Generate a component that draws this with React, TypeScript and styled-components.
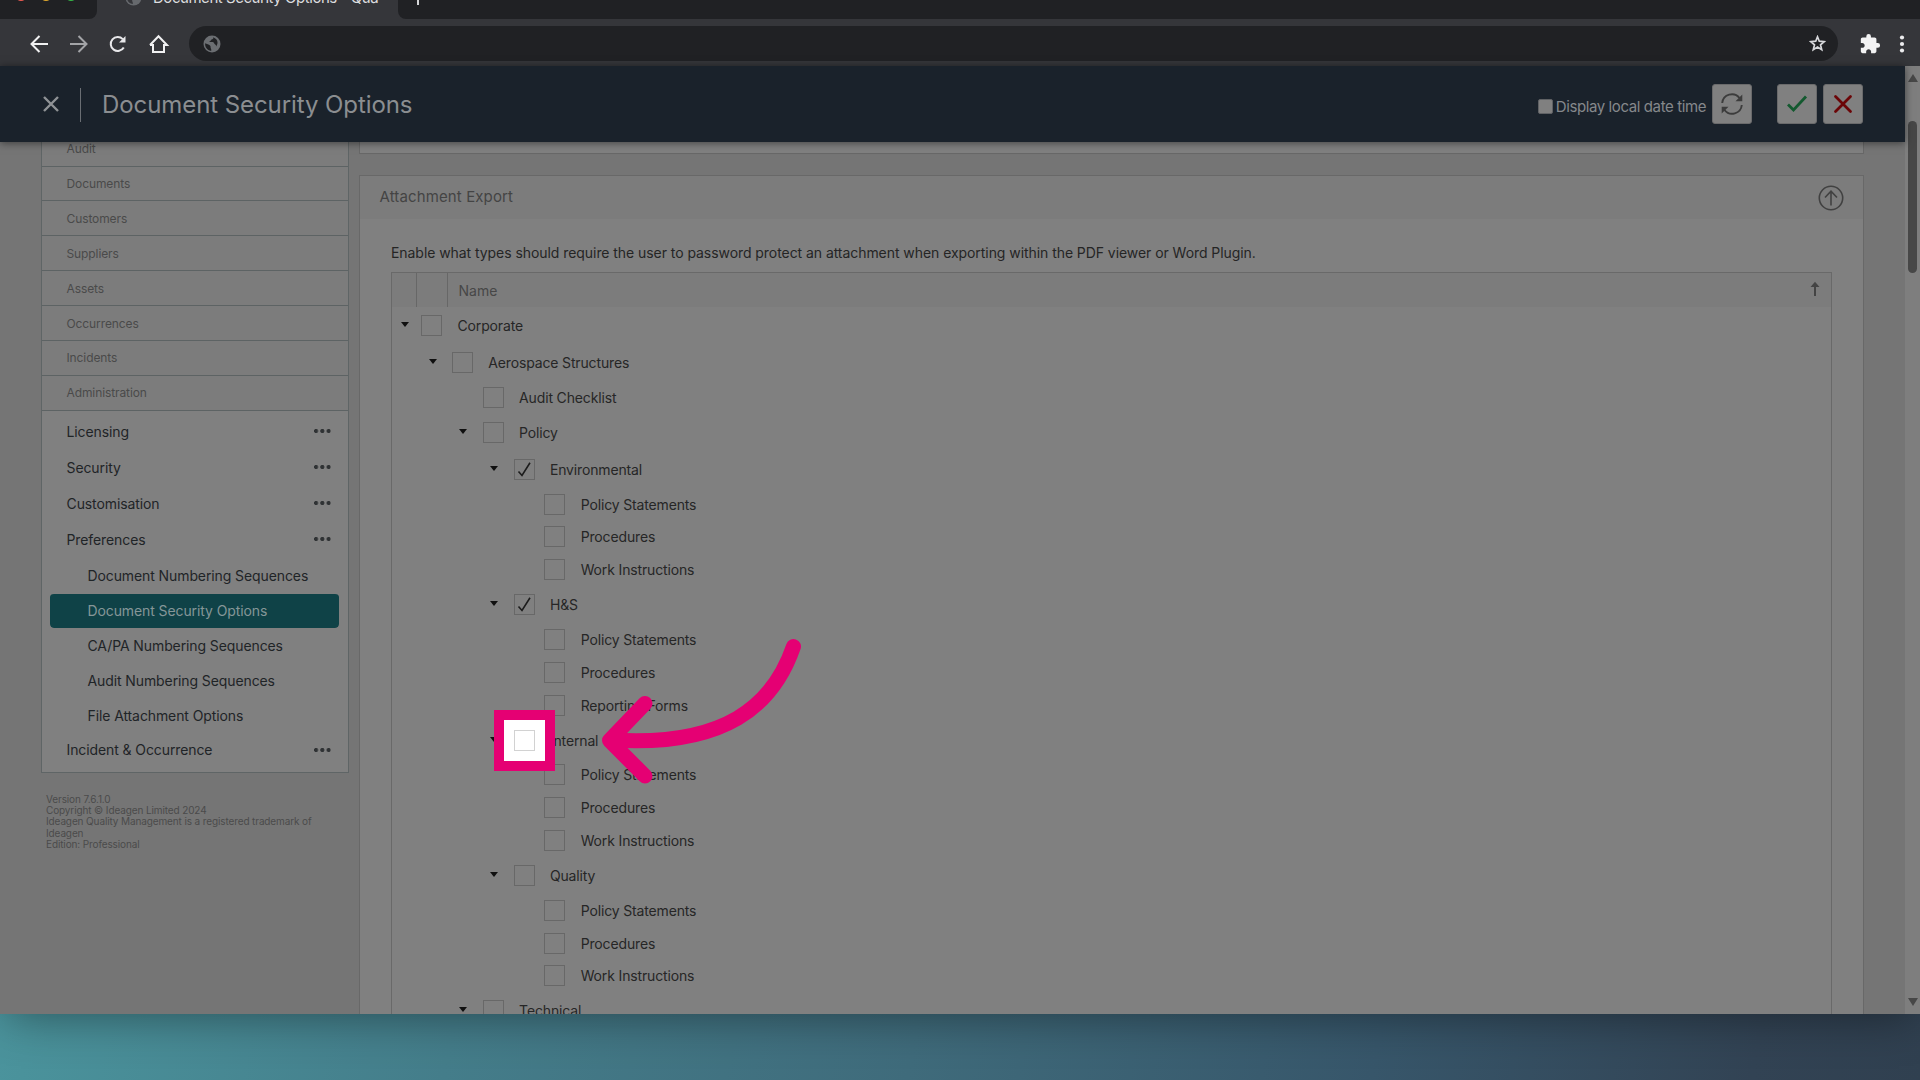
import React from "react";
import styled, { createGlobalStyle } from "styled-components";

const GlobalStyle = createGlobalStyle`
  * { box-sizing: border-box; }
  html, body { margin: 0; padding: 0; overflow: hidden; }
  body { font-family: Inter, "Liberation Sans", sans-serif; }
`;

const PINK = "#e50073";

const Page = styled.div`
  position: relative;
  width: 1920px;
  height: 1080px;
  overflow: hidden;
  background: linear-gradient(100deg, #4f9ba4 0%, #4a929b 10%, #447d8a 30%, #3f6b7b 52%, #37566a 74%, #324354 92%, #304050 100%);
`;

const Browser = styled.div`
  display: flex;
  flex-direction: column;
  height: 1014px;
  overflow: hidden;
  background: #35363a;
  box-shadow: 0 8px 44px -6px rgba(0, 0, 0, 0.42);
`;

const TabStrip = styled.div`
  display: flex;
  flex: none;
  height: 43px;
  margin-top: -24px;
  background: #35363a;
`;

const StripEnd = styled.div<{ $side: "left" | "right" }>`
  display: flex;
  align-items: center;
  background: #202124;
  ${(p) =>
    p.$side === "left"
      ? "width: 97px; padding: 0 0 5px 15px; gap: 13px; border-bottom-right-radius: 8px;"
      : "flex: 1; padding-left: 12px; border-bottom-left-radius: 8px;"}
`;

const Light = styled.span<{ $color: string }>`
  width: 12px;
  height: 12px;
  border-radius: 50%;
  background: ${(p) => p.$color};
`;

const ActiveTab = styled.div`
  display: flex;
  align-items: center;
  gap: 11px;
  width: 301px;
  padding-left: 28px;
  color: #dcdddf;
  font-size: 15px;
  letter-spacing: -0.46px;
  white-space: nowrap;
`;

const Toolbar = styled.div`
  display: flex;
  flex: none;
  align-items: center;
  height: 47px;
  padding: 2px 9px 0 28px;
`;

const NavIcons = styled.div`
  display: flex;
  gap: 16px;
  width: 161px;
`;

const AddressBar = styled.div`
  display: flex;
  align-items: center;
  justify-content: space-between;
  width: 1649px;
  height: 35px;
  padding: 0 12px 0 14px;
  border-radius: 18px;
  background: #202124;
`;

const BarActions = styled.div`
  display: flex;
  flex: 1;
  align-items: center;
  justify-content: space-between;
  padding-left: 21px;
`;

const AppBar = styled.header`
  position: relative;
  z-index: 1;
  display: flex;
  flex: none;
  align-items: center;
  width: 1905px;
  height: 76px;
  padding: 0 42px 0 42px;
  background: #1a222b;
  box-shadow: 0 1px 8px rgba(0, 0, 0, 0.5);
`;

const Separator = styled.span`
  width: 1px;
  height: 34px;
  margin: 2px 21px 0 20px;
  background: #6a6e73;
`;

const Title = styled.h1`
  flex: 1;
  margin: 0;
  color: #8b8e91;
  font-size: 24px;
  font-weight: 400;
  letter-spacing: -0.08px;
`;

const LocalTime = styled.label`
  display: flex;
  align-items: center;
  gap: 3px;
  margin: 5px 6px 0 0;
  color: #85888b;
  font-size: 15px;
  letter-spacing: -0.4px;
`;

const NativeBox = styled.span`
  width: 15px;
  height: 15px;
  border: 1px solid #5f6164;
  border-radius: 2px;
  background: #808080;
`;

const IconButton = styled.button<{ $gap?: number }>`
  display: flex;
  align-items: center;
  justify-content: center;
  width: 40px;
  height: 40px;
  margin: 0 0 0 ${(p) => p.$gap ?? 0}px;
  padding: 0;
  border: 1px solid #6a6a6b;
  border-radius: 3px;
  background: #808080;
`;

const Viewport = styled.div`
  display: flex;
  flex: 1;
  min-height: 0;
`;

const Content = styled.div`
  display: flex;
  align-items: flex-start;
  width: 1905px;
  padding-left: 41px;
  overflow: hidden;
  background: #757575;
`;

const Sidebar = styled.aside`
  width: 308px;
  margin: -10.3px 10px 0 0;
`;

const Menu = styled.nav`
  border: 1px solid #5f6566;
  border-top: 0;
  background: #808080;
`;

const Section = styled.div`
  display: flex;
  align-items: center;
  height: 34.9px;
  padding-left: 24.5px;
  border-bottom: 1px solid #5d6364;
  background: #7c7c7c;
  color: #4a4a4a;
  font-size: 12px;
  letter-spacing: -0.1px;
`;

const SubMenu = styled.div`
  padding: 3px 9px 4px 8px;
`;

const MenuItem = styled.div<{ $level?: number; $tall?: boolean; $active?: boolean }>`
  display: flex;
  align-items: center;
  justify-content: space-between;
  height: ${(p) => (p.$tall ? 36 : 35)}px;
  padding: 0 8px ${(p) => (p.$level ? 1 : 2)}px ${(p) => (p.$level ? 37.5 : 16.5)}px;
  border-top: 1px solid transparent;
  border-radius: 4px;
  background: ${(p) => (p.$active ? "#0f4247" : "transparent")};
  background-clip: padding-box;
  color: ${(p) => (p.$active ? "#859698" : "#1f2427")};
  font-size: 14px;
  letter-spacing: -0.1px;
  white-space: nowrap;
`;

const Dots = styled.span`
  width: 17px;
  height: 4px;
  background: radial-gradient(circle at 2px 2px, #2f3234 1.8px, transparent 2.3px) 0 0 / 6.3px 4px;
`;

const Footnote = styled.p`
  margin: 21px 30px 0 5px;
  color: #4b4b4b;
  font-size: 10px;
  line-height: 11.3px;
  letter-spacing: -0.12px;
`;

const Main = styled.main`
  width: 1505px;
`;

const PreviousPanel = styled.div`
  height: 12px;
  margin-bottom: 21px;
  border: 1px solid #686868;
  border-top: 0;
  background: #808080;
`;

const Panel = styled.section`
  height: 900px;
  border: 1px solid #686868;
  background: #808080;
`;

const PanelHeader = styled.header`
  display: flex;
  align-items: center;
  justify-content: space-between;
  height: 43px;
  padding: 0 19px 0 19.5px;
  background: #7c7c7c;
  color: #444444;
  font-size: 15px;
  letter-spacing: 0.12px;
`;

const PanelTitle = styled.span`
  padding-bottom: 2px;
`;

const Hint = styled.p`
  margin: 24px 0 9px 31px;
  color: #252525;
  font-size: 14px;
  line-height: 20px;
  letter-spacing: -0.06px;
`;

const Grid = styled.div`
  width: 1441px;
  height: 800px;
  margin-left: 31px;
  border: 1px solid #696969;
`;

const GridHead = styled.div`
  display: grid;
  grid-template-columns: 25px 31px 1fr 22px;
  align-items: center;
  height: 34px;
  background: #7c7c7c;
  color: #474747;
  font-size: 14px;
`;

const HeadCell = styled.span<{ $ruled?: boolean }>`
  display: flex;
  align-items: center;
  height: 100%;
  padding-left: ${(p) => (p.$ruled ? 0 : 10.5)}px;
  ${(p) => p.$ruled && "border-right: 1px solid #676767;"}
`;

const SortArrow = styled.svg`
  margin-top: -2px;
`;

const TreeRow = styled.div<{ $level: number; $leaf?: boolean }>`
  display: flex;
  align-items: center;
  height: ${(p) => (p.$leaf ? 32.8 : 37)}px;
  padding-left: ${(p) => (p.$level ? p.$level * 30.8 - 5.6 : 0)}px;
  color: #262626;
  font-size: 14px;
  letter-spacing: -0.15px;
`;

const CaretCell = styled.span<{ $root?: boolean }>`
  display: flex;
  justify-content: center;
  width: ${(p) => (p.$root ? 25.2 : 30.8)}px;
  margin-top: -2px;
`;

const Caret = styled.span`
  border: 4.5px solid transparent;
  border-top: 5px solid #101010;
  border-bottom: 0;
`;

const CheckBox = styled.span`
  display: flex;
  align-items: center;
  justify-content: center;
  width: 21px;
  height: 21px;
  margin: 0 15.3px 0 4px;
  border: 1px solid #686868;
`;

const Scrollbar = styled.div`
  display: flex;
  flex-direction: column;
  align-items: center;
  width: 15px;
  margin-top: -76px;
  padding: 8px 0;
  background: #7e7e7e;
`;

const ScrollArrow = styled.span<{ $down?: boolean }>`
  border: 5px solid transparent;
  ${(p) =>
    p.$down
      ? "border-top: 8px solid #474747; border-bottom: 0;"
      : "border-bottom: 8px solid #474747; border-top: 0;"}
`;

const Thumb = styled.span`
  width: 9px;
  height: 152px;
  margin: 39px 0 auto;
  border-radius: 5px;
  background: #474747;
`;

const Spotlight = styled.div`
  position: absolute;
  left: 494px;
  top: 710px;
  display: flex;
  align-items: center;
  justify-content: center;
  width: 61px;
  height: 61px;
  border: 10px solid ${PINK};
  background: #ffffff;
`;

const SpotBox = styled.span`
  width: 21px;
  height: 21px;
  border: 1px solid #d2d2d2;
`;

const ArrowLayer = styled.svg`
  position: absolute;
  left: 590px;
  top: 630px;
`;

const Globe = ({ size, color, hole }: { size: number; color: string; hole: string }) => (
  <svg width={size} height={size} viewBox="0 0 18 18">
    <circle cx="9" cy="9" r="8.5" fill={color} />
    <path
      d="M10 2.2c1 1.3-.3 2.2-1.600 2.400-.2 1.200-1.300 1.300-2.200 1.600.6 1 2 .8 3.500.9 1.300.2 1.200 1.800 2.500 2.300.8.4 1.200 1.400.7 2.400 2.200-2.600 3.100-7.400-2.900-9.600z M2.200 8.300c1.500.8 3.600 1.300 4.800 2.200 1 .9.300 2 .900 3.100.4.700.5 1.500.300 2.300-3.900-.5-6.500-3.600-6-7.600z"
      fill={hole}
    />
  </svg>
);

const BackArrow = ({ color, flip }: { color: string; flip?: boolean }) => (
  <svg width="23" height="22" viewBox="0 0 23 22" fill="none" stroke={color} strokeWidth="2">
    <path d={flip ? "M3 11H19M11.500 3L19.500 11L11.500 19" : "M20 11H4M11.500 3L3.500 11L11.500 19"} />
  </svg>
);

type Node = { label: string; level: number; leaf?: boolean; checked?: boolean };

const tree: Node[] = [
  { label: "Corporate", level: 0 },
  { label: "Aerospace Structures", level: 1 },
  { label: "Audit Checklist", level: 2, leaf: true },
  { label: "Policy", level: 2 },
  { label: "Environmental", level: 3, checked: true },
  { label: "Policy Statements", level: 4, leaf: true },
  { label: "Procedures", level: 4, leaf: true },
  { label: "Work Instructions", level: 4, leaf: true },
  { label: "H&S", level: 3, checked: true },
  { label: "Policy Statements", level: 4, leaf: true },
  { label: "Procedures", level: 4, leaf: true },
  { label: "Reporting Forms", level: 4, leaf: true },
  { label: "Internal", level: 3 },
  { label: "Policy Statements", level: 4, leaf: true },
  { label: "Procedures", level: 4, leaf: true },
  { label: "Work Instructions", level: 4, leaf: true },
  { label: "Quality", level: 3 },
  { label: "Policy Statements", level: 4, leaf: true },
  { label: "Procedures", level: 4, leaf: true },
  { label: "Work Instructions", level: 4, leaf: true },
  { label: "Technical", level: 2 },
];

const sections = ["Audit", "Documents", "Customers", "Suppliers", "Assets", "Occurrences", "Incidents", "Administration"];
const groups = ["Licensing", "Security", "Customisation", "Preferences"];
const preferences = [
  "Document Numbering Sequences",
  "Document Security Options",
  "CA/PA Numbering Sequences",
  "Audit Numbering Sequences",
  "File Attachment Options",
];

export default function App() {
  return (
    <Page>
      <GlobalStyle />
      <Browser>
        <TabStrip>
          <StripEnd $side="left">
            <Light $color="#ee5b52" />
            <Light $color="#e0a92e" />
            <Light $color="#35b847" />
          </StripEnd>
          <ActiveTab>
            <Globe size={17} color="#66696d" hole="#35363a" />
            Document Security Options - Qua
          </ActiveTab>
          <StripEnd $side="right">
            <svg width="16" height="16" viewBox="0 0 16 16" stroke="#d5d6d8" strokeWidth="2">
              <path d="M8 1V15M1 8H15" />
            </svg>
          </StripEnd>
        </TabStrip>

        <Toolbar>
          <NavIcons>
            <BackArrow color="#f1f1f2" />
            <BackArrow color="#a3a4a7" flip />
            <svg width="24" height="22" viewBox="0 0 24 22" fill="none">
              <path d="M17.800 14.500A7 7 0 1 1 16.800 6.100" stroke="#e8e8ea" strokeWidth="2" />
              <path d="M19.500 3V9.500H13z" fill="#e8e8ea" />
            </svg>
            <svg width="24" height="22" viewBox="0 0 24 22" fill="none" stroke="#f1f1f2" strokeWidth="2">
              <path d="M7 11V19H18V11M4 12L12.500 3.200L21 12H18M4 12H7" />
            </svg>
          </NavIcons>
          <AddressBar>
            <Globe size={18} color="#6b6e72" hole="#202124" />
            <svg width="17" height="17" viewBox="0 0 17 17" fill="none" stroke="#d8d9dc" strokeWidth="1.700">
              <path d="M8.500 1.800L10.300 6.200L15.200 6.600L11.500 9.800L12.700 14.600L8.500 12L4.300 14.600L5.500 9.800L1.800 6.600L6.700 6.200Z" />
            </svg>
          </AddressBar>
          <BarActions>
            <svg width="22" height="22" viewBox="0 0 24 24" fill="#f3f3f4">
              <path d="M20.500 11H19V7c0-1.100-.9-2-2-2h-4V3.500a2.500 2.500 0 0 0-5 0V5H4c-1.100 0-1.990.9-1.990 2v3.800H3.500c1.490 0 2.700 1.210 2.700 2.700s-1.210 2.700-2.700 2.700H2V20c0 1.100.9 2 2 2h3.800v-1.500c0-1.490 1.210-2.700 2.700-2.700s2.700 1.210 2.700 2.700V22H17c1.100 0 2-.9 2-2v-4h1.500a2.500 2.500 0 0 0 0-5z" />
            </svg>
            <svg width="18" height="20" viewBox="0 0 18 20" fill="#ececee">
              <circle cx="9" cy="3.500" r="2.100" />
              <circle cx="9" cy="10" r="2.100" />
              <circle cx="9" cy="16.500" r="2.100" />
            </svg>
          </BarActions>
        </Toolbar>

        <AppBar>
          <svg width="18" height="18" viewBox="0 0 18 18" stroke="#8f9295" strokeWidth="2.400">
            <path d="M2 2L16 16M16 2L2 16" />
          </svg>
          <Separator />
          <Title>Document Security Options</Title>
          <LocalTime>
            <NativeBox />
            Display local date time
          </LocalTime>
          <IconButton>
            <svg width="24" height="24" viewBox="0 0 24 24" fill="none" stroke="#3c3c3c" strokeWidth="1.900">
              <path d="M2.200 11A9.700 9.700 0 0 1 19.500 6M21.800 13A9.700 9.700 0 0 1 4.500 18" />
              <path d="M22.300 2.500V9.300H15.500zM1.700 21.500V14.700H8.500z" fill="#3c3c3c" stroke="none" />
            </svg>
          </IconButton>
          <IconButton $gap={25}>
            <svg width="22" height="20" viewBox="0 0 22 20" fill="none" stroke="#13592f" strokeWidth="2.800">
              <path d="M2 10.500L7.500 16L20 2.500" />
            </svg>
          </IconButton>
          <IconButton $gap={6}>
            <svg width="20" height="20" viewBox="0 0 20 20" fill="none" stroke="#6b0507" strokeWidth="2.800" strokeLinecap="round">
              <path d="M2.500 2.500L17.500 17.500M17.500 2.500L2.500 17.500" />
            </svg>
          </IconButton>
        </AppBar>

        <Viewport>
          <Content>
            <Sidebar>
              <Menu>
                {sections.map((s) => (
                  <Section key={s}>{s}</Section>
                ))}
                <SubMenu>
                  {groups.map((g) => (
                    <MenuItem key={g} $tall>
                      {g}
                      <Dots />
                    </MenuItem>
                  ))}
                  {preferences.map((p) => (
                    <MenuItem key={p} $level={1} $active={p === "Document Security Options"}>
                      {p}
                    </MenuItem>
                  ))}
                  <MenuItem>
                    Incident &amp; Occurrence
                    <Dots />
                  </MenuItem>
                </SubMenu>
              </Menu>
              <Footnote>
                Version 7.6.1.0
                <br />
                Copyright © Ideagen Limited 2024
                <br />
                Ideagen Quality Management is a registered trademark of
                <br />
                Ideagen
                <br />
                Edition: Professional
              </Footnote>
            </Sidebar>

            <Main>
              <PreviousPanel />
              <Panel>
                <PanelHeader>
                  <PanelTitle>Attachment Export</PanelTitle>
                  <svg width="26" height="26" viewBox="0 0 26 26" fill="none" stroke="#414141" strokeWidth="1.600">
                    <circle cx="13" cy="13" r="11.700" />
                    <path d="M13 20.500V6.500M7 12.500L13 6.200L19 12.500" />
                  </svg>
                </PanelHeader>
                <Hint>
                  Enable what types should require the user to password protect an attachment when exporting within the
                  PDF viewer or Word Plugin.
                </Hint>
                <Grid>
                  <GridHead>
                    <HeadCell $ruled />
                    <HeadCell $ruled />
                    <HeadCell>Name</HeadCell>
                    <SortArrow width="12" height="16" viewBox="0 0 12 16" fill="none" stroke="#444444" strokeWidth="2">
                      <path d="M6 15V3" />
                      <path d="M1.500 6L6 0.800L10.500 6Z" fill="#444444" stroke="none" />
                    </SortArrow>
                  </GridHead>
                  {tree.map((n, i) => (
                    <TreeRow key={i} $level={n.level} $leaf={n.leaf}>
                      <CaretCell $root={n.level === 0}>{!n.leaf && <Caret />}</CaretCell>
                      <CheckBox>
                        {n.checked && (
                          <svg width="15" height="17" viewBox="0 0 15 17" fill="none" stroke="#1c1c1c" strokeWidth="1.600">
                            <path d="M1.500 10.500L5 14.500L13 1.800" />
                          </svg>
                        )}
                      </CheckBox>
                      {n.label}
                    </TreeRow>
                  ))}
                </Grid>
              </Panel>
            </Main>
          </Content>
          <Scrollbar>
            <ScrollArrow />
            <Thumb />
            <ScrollArrow $down />
          </Scrollbar>
        </Viewport>
      </Browser>

      <Spotlight>
        <SpotBox />
      </Spotlight>
      <ArrowLayer width="230" height="170" viewBox="590 630 230 170" fill="none" stroke={PINK} strokeWidth="15" strokeLinecap="round" strokeLinejoin="round">
        <path d="M793.500 646.500C773 706 725 747 612 740" />
        <path d="M645 703.500L609.500 740.500L645 776" />
      </ArrowLayer>
    </Page>
  );
}
